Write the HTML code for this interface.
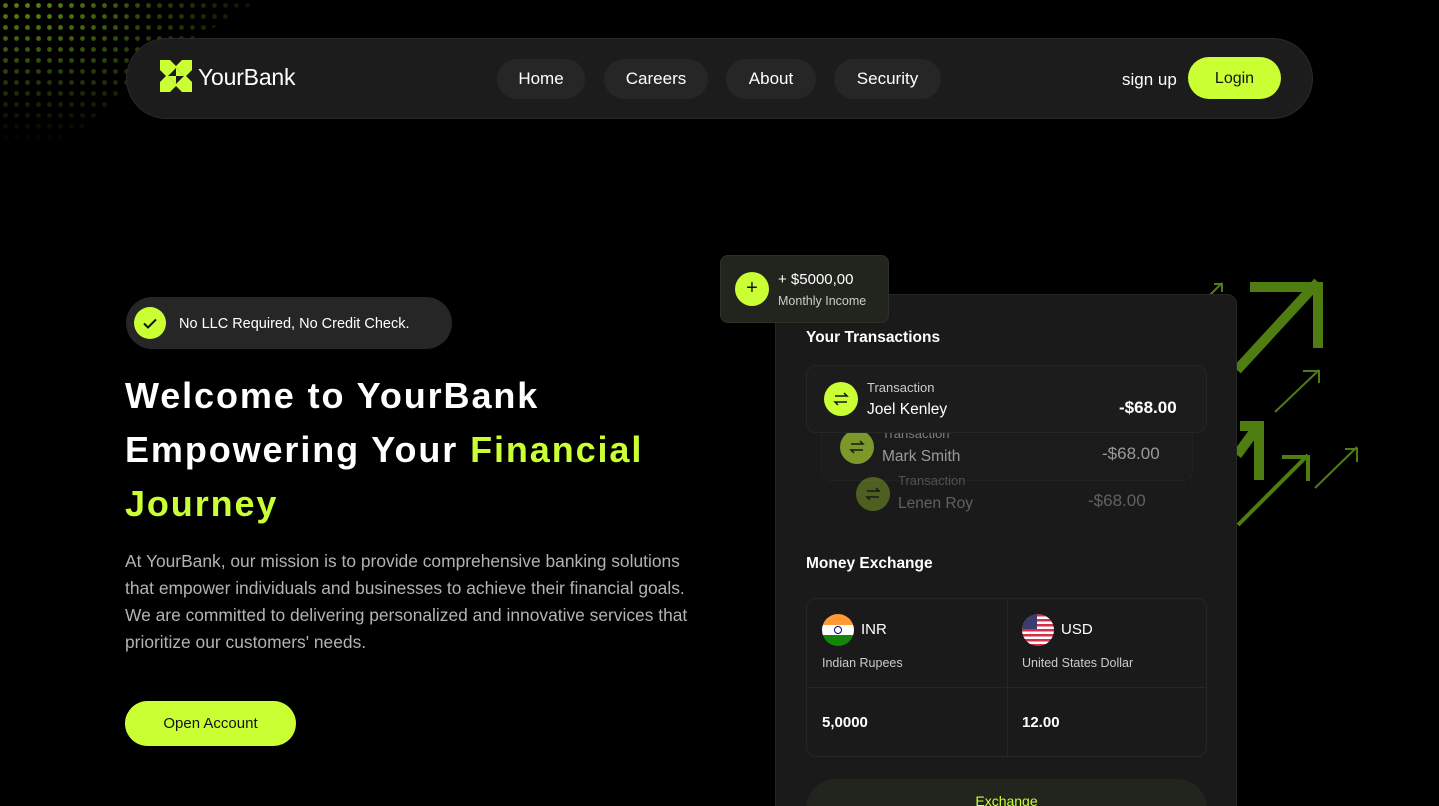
<!DOCTYPE html>
<html><head><meta charset="utf-8"><style>
*{margin:0;padding:0;box-sizing:border-box}
html,body{width:1439px;height:806px;overflow:hidden}
body{background:#000;position:relative;font-family:"Liberation Sans",sans-serif;color:#fff}
.abs{position:absolute}
.nav{left:126px;top:38px;width:1187px;height:81px;background:#1c1c1c;border:1px solid #2a2a2a;border-radius:41px}
.link{position:absolute;top:20px;height:40px;background:#262626;border-radius:20px;font-size:17px;line-height:40px;text-align:center;color:#fff}
.btn{background:#caff33;color:#141414;border-radius:24px;text-align:center}
h1{position:absolute;left:125px;top:369px;font-size:36px;line-height:54px;font-weight:bold;letter-spacing:1.9px}
.g{color:#caff33}
p.d{position:absolute;left:125px;top:548px;width:580px;font-size:17.4px;line-height:27px;color:#b3b3b3}
.card{left:775px;top:294px;width:462px;height:540px;background:#1a1a1a;border:1px solid #262626;border-radius:10px}
.tx{position:absolute;border:1px solid #262626;border-radius:10px;background:#1c1c1c}
.ic{position:absolute;width:34px;height:34px;border-radius:50%;background:#caff33;display:flex;align-items:center;justify-content:center}
</style></head><body>
<svg class="abs" style="left:0;top:0" width="330" height="170">
<defs><radialGradient id="rg" cx="0.1" cy="0.05" r="0.8"><stop offset="0" stop-color="#6a9e14"/><stop offset="0.5" stop-color="#2e460b"/><stop offset="1" stop-color="#000"/></radialGradient>
<pattern id="dots" width="11" height="11" patternUnits="userSpaceOnUse"><circle cx="5.5" cy="5.5" r="2.4" fill="#fff"/></pattern>
<mask id="m"><path d="M0 0H260Q170 50 80 130L0 170Z" fill="url(#dots)"/></mask></defs>
<rect width="330" height="170" fill="url(#rg)" mask="url(#m)" opacity="0.85"/>
</svg>
<svg class="abs" style="left:1180px;top:270px" width="200" height="280" fill="none" stroke-linecap="butt">
<g stroke="#4f7d12">
<path d="M138 12 L57 100" stroke-width="10"/><path d="M70 17 H138 V78" stroke-width="10"/>
<path d="M139 100 L95 142" stroke-width="2"/><path d="M123 101 H139 V113" stroke-width="2"/>
<path d="M79 155 L57 185" stroke-width="10"/><path d="M60 156 H79 V210" stroke-width="10"/>
<path d="M128 185 L58 255" stroke-width="4"/><path d="M102 187 H128 V211" stroke-width="4"/>
<path d="M177 177 L135 218" stroke-width="2"/><path d="M165 179 H177 V192" stroke-width="2"/>
<path d="M42 13 L30 25" stroke-width="2"/><path d="M34 14 H42 V22" stroke-width="2"/>
</g></svg>
<div class="abs nav">
<svg class="abs" style="left:33px;top:21px" width="32" height="32" viewBox="0 0 32 32"><path d="M0 0H10L16 6L22 0H32V10L26 16L32 22V32H22L16 26L10 32H0V22L6 16L0 10Z" fill="#caff33"/><path d="M16 8L24 16L16 24L8 16Z" fill="#1c1c1c"/><path d="M8 16H16V24Z M24 16H16V8Z" fill="#caff33"/></svg>
<div class="abs" style="left:71px;top:25px;font-size:23px;letter-spacing:-0.2px">YourBank</div>
<div class="link" style="left:370px;width:88px">Home</div>
<div class="link" style="left:477px;width:104px">Careers</div>
<div class="link" style="left:599px;width:90px">About</div>
<div class="link" style="left:707px;width:107px">Security</div>
<div class="abs" style="left:995px;top:31px;font-size:17px">sign up</div>
<div class="abs btn" style="left:1061px;top:18px;width:93px;height:42px;line-height:44px;font-size:16px">Login</div>
</div>
<div class="abs" style="left:126px;top:297px;width:326px;height:52px;background:#262626;border-radius:26px">
<div class="abs" style="left:8px;top:10px;width:32px;height:32px;border-radius:50%;background:#caff33"><svg width="32" height="32"><path d="M10 16.5l4 4 8-8" stroke="#141414" stroke-width="2" fill="none"/></svg></div>
<div class="abs" style="left:53px;top:19px;font-size:14.5px">No LLC Required, No Credit Check.</div>
</div>
<h1>Welcome to YourBank<br>Empowering Your <span class="g">Financial</span><br><span class="g">Journey</span></h1>
<p class="d">At YourBank, our mission is to provide comprehensive banking solutions that empower individuals and businesses to achieve their financial goals. We are committed to delivering personalized and innovative services that prioritize our customers' needs.</p>
<div class="abs btn" style="left:125px;top:701px;width:171px;height:45px;line-height:45px;font-size:15px">Open Account</div>
<div class="abs card">
<div class="abs" style="left:30px;top:34px;font-size:15.5px;font-weight:bold">Your Transactions</div>
<div class="tx" style="left:60px;top:170px;width:356px;height:50px;opacity:.35;border-color:#222"></div>
<div class="tx" style="left:45px;top:120px;width:372px;height:66px;opacity:.6"></div>
<div style="position:absolute;left:80px;top:180px;opacity:.3;width:340px">
<div class="ic" style="left:0;top:2px"><svg width="18" height="18" viewBox="0 0 18 18" fill="none" stroke="#141414" stroke-width="1.5"><path d="M3 6h12l-3-3M15 12H3l3 3"/></svg></div>
<div class="abs" style="left:42px;top:-2px;font-size:13px;color:#ccc">Transaction</div>
<div class="abs" style="left:42px;top:20px;font-size:15.5px">Lenen Roy</div>
<div class="abs" style="left:232px;top:16px;font-size:17px">-$68.00</div></div>
<div style="position:absolute;left:64px;top:133px;opacity:.55;width:340px">
<div class="ic" style="left:0;top:2px"><svg width="18" height="18" viewBox="0 0 18 18" fill="none" stroke="#141414" stroke-width="1.5"><path d="M3 6h12l-3-3M15 12H3l3 3"/></svg></div>
<div class="abs" style="left:42px;top:-2px;font-size:13px;color:#ccc">Transaction</div>
<div class="abs" style="left:42px;top:20px;font-size:15.5px">Mark Smith</div>
<div class="abs" style="left:262px;top:16px;font-size:17px">-$68.00</div></div>
<div class="tx" style="left:30px;top:70px;width:401px;height:68px;background:#1c1c1c">
<div class="ic" style="left:17px;top:16px"><svg width="18" height="18" viewBox="0 0 18 18" fill="none" stroke="#141414" stroke-width="1.5"><path d="M3 6h12l-3-3M15 12H3l3 3"/></svg></div>
<div class="abs" style="left:60px;top:14px;font-size:13px;color:#ccc">Transaction</div>
<div class="abs" style="left:60px;top:35px;font-size:15.5px">Joel Kenley</div>
<div class="abs" style="left:312px;top:32px;font-size:17px;font-weight:bold">-$68.00</div></div>
<div class="abs" style="left:30px;top:260px;font-size:15.5px;font-weight:bold">Money Exchange</div>
<div class="abs" style="left:30px;top:303px;width:401px;height:159px;border:1px solid #262626;border-radius:10px">
<div class="abs" style="left:200px;top:0;width:1px;height:157px;background:#262626"></div>
<div class="abs" style="left:0;top:88px;width:399px;height:1px;background:#262626"></div>
<div class="abs" style="left:15px;top:15px;width:32px;height:32px;border-radius:50%;overflow:hidden;background:linear-gradient(#ff9933 0 34%,#fff 34% 66%,#138808 66%)"><div class="abs" style="left:12px;top:12px;width:8px;height:8px;border-radius:50%;border:1.5px solid #000080"></div></div>
<div class="abs" style="left:54px;top:22px;font-size:15px">INR</div>
<div class="abs" style="left:15px;top:57px;font-size:12.5px;color:#ccc">Indian Rupees</div>
<div class="abs" style="left:215px;top:15px;width:32px;height:32px;border-radius:50%;overflow:hidden;background:repeating-linear-gradient(#d22f4a 0 2.5px,#fff 2.5px 5px)"><div class="abs" style="left:0;top:0;width:15px;height:15px;background:#3c3b6e"></div></div>
<div class="abs" style="left:254px;top:22px;font-size:15px">USD</div>
<div class="abs" style="left:215px;top:57px;font-size:12.5px;color:#ccc">United States Dollar</div>
<div class="abs" style="left:15px;top:115px;font-size:15px;font-weight:bold">5,0000</div>
<div class="abs" style="left:215px;top:115px;font-size:15px;font-weight:bold">12.00</div>
</div>
<div class="abs" style="left:30px;top:484px;width:401px;height:60px;background:#22251e;border-radius:30px;text-align:center;color:#caff33;font-size:14px;padding-top:14px">Exchange</div>
</div>
<div class="abs" style="left:720px;top:255px;width:169px;height:68px;background:#22251e;border-radius:8px;border:1px solid #2c3226">
<div class="abs" style="left:14px;top:16px;width:34px;height:34px;border-radius:50%;background:#caff33;color:#141414;text-align:center;line-height:33px;font-size:20px">+</div>
<div class="abs" style="left:57px;top:15px;font-size:15px">+ $5000,00</div>
<div class="abs" style="left:57px;top:38px;font-size:12.5px;color:#ccc">Monthly Income</div>
</div>
</body></html>
